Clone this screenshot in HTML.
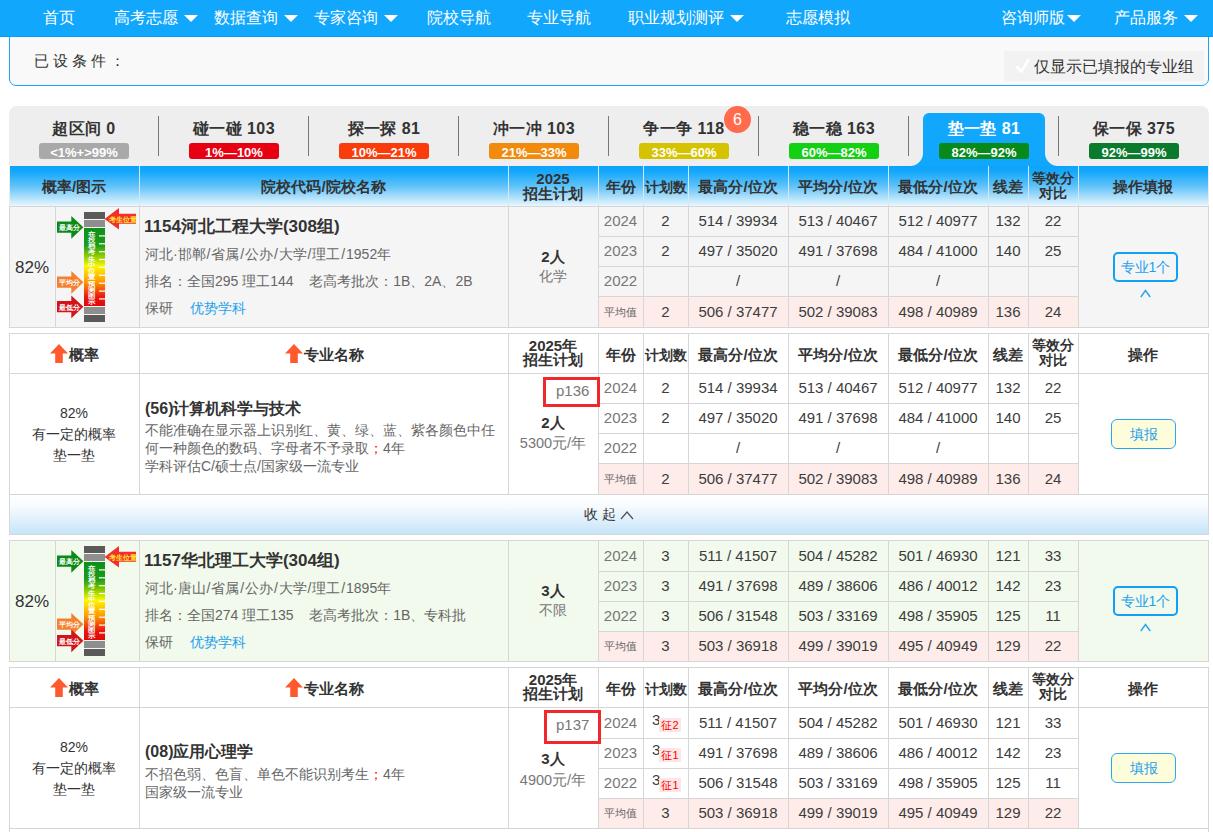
<!DOCTYPE html><html><head><meta charset="utf-8"><style>html,body{margin:0;padding:0;}body{width:1213px;height:832px;overflow:hidden;position:relative;background:#fff;font-family:"Liberation Sans", sans-serif;}</style></head><body><div style="position:absolute;left:9px;top:30px;width:1198px;height:54px;border:1px solid #18a6f6;border-radius:0 0 7px 7px;background:#f9f9f9;"></div>
<div style="position:absolute;left:0px;top:0px;width:1213px;height:37px;background:#11a7fd"></div>
<div style="position:absolute;left:0px;top:36px;width:1213px;height:1px;background:#03a0f8"></div>
<div style="position:absolute;left:43px;top:8.0px;height:20px;line-height:20px;font-size:16px;color:#fff;white-space:nowrap;">首页</div>
<div style="position:absolute;left:114px;top:8.0px;height:20px;line-height:20px;font-size:16px;color:#fff;white-space:nowrap;">高考志愿</div>
<div style="position:absolute;left:184px;top:15px;width:0;height:0;border-left:7.0px solid transparent;border-right:7.0px solid transparent;border-top:7px solid #fff;"></div>
<div style="position:absolute;left:214px;top:8.0px;height:20px;line-height:20px;font-size:16px;color:#fff;white-space:nowrap;">数据查询</div>
<div style="position:absolute;left:284px;top:15px;width:0;height:0;border-left:7.0px solid transparent;border-right:7.0px solid transparent;border-top:7px solid #fff;"></div>
<div style="position:absolute;left:314px;top:8.0px;height:20px;line-height:20px;font-size:16px;color:#fff;white-space:nowrap;">专家咨询</div>
<div style="position:absolute;left:384px;top:15px;width:0;height:0;border-left:7.0px solid transparent;border-right:7.0px solid transparent;border-top:7px solid #fff;"></div>
<div style="position:absolute;left:427px;top:8.0px;height:20px;line-height:20px;font-size:16px;color:#fff;white-space:nowrap;">院校导航</div>
<div style="position:absolute;left:527px;top:8.0px;height:20px;line-height:20px;font-size:16px;color:#fff;white-space:nowrap;">专业导航</div>
<div style="position:absolute;left:628px;top:8.0px;height:20px;line-height:20px;font-size:16px;color:#fff;white-space:nowrap;">职业规划测评</div>
<div style="position:absolute;left:730px;top:15px;width:0;height:0;border-left:7.0px solid transparent;border-right:7.0px solid transparent;border-top:7px solid #fff;"></div>
<div style="position:absolute;left:786px;top:8.0px;height:20px;line-height:20px;font-size:16px;color:#fff;white-space:nowrap;">志愿模拟</div>
<div style="position:absolute;left:1001px;top:8.0px;height:20px;line-height:20px;font-size:16px;color:#fff;white-space:nowrap;">咨询师版</div>
<div style="position:absolute;left:1067px;top:15px;width:0;height:0;border-left:7.0px solid transparent;border-right:7.0px solid transparent;border-top:7px solid #fff;"></div>
<div style="position:absolute;left:1114px;top:8.0px;height:20px;line-height:20px;font-size:16px;color:#fff;white-space:nowrap;">产品服务</div>
<div style="position:absolute;left:1184px;top:15px;width:0;height:0;border-left:7.0px solid transparent;border-right:7.0px solid transparent;border-top:7px solid #fff;"></div>
<div style="position:absolute;left:34px;top:50.0px;height:21px;line-height:21px;font-size:15px;color:#333;white-space:nowrap;letter-spacing:4px;">已设条件：</div>
<div style="position:absolute;left:1004px;top:51px;width:200px;height:30px;background:#f2f2f2"></div>
<svg style="position:absolute;left:1012px;top:55px" width="22" height="22"><polyline points="5.3,12.3 9.3,16.6 16.2,5.2" fill="none" stroke="#fff" stroke-width="2.8" stroke-linecap="round" stroke-linejoin="round"/></svg>
<div style="position:absolute;left:1034px;top:56.0px;height:22px;line-height:22px;font-size:16px;color:#333;white-space:nowrap;">仅显示已填报的专业组</div>
<div style="position:absolute;left:9px;top:106px;width:1200px;height:60px;background:#eeeeee;border-radius:8px 8px 0 0;"></div>
<div style="position:absolute;left:923px;top:113px;width:122px;height:53px;background:#11a7fd;border-radius:6px 6px 0 0;"></div>
<div style="position:absolute;left:910px;top:153px;width:13px;height:13px;background:radial-gradient(circle at 0 0, transparent 12.5px, #11a7fd 13.5px);"></div>
<div style="position:absolute;left:1045px;top:153px;width:13px;height:13px;background:radial-gradient(circle at 100% 0, transparent 12.5px, #11a7fd 13.5px);"></div>
<div style="position:absolute;left:158px;top:116px;width:1px;height:40px;background:#777"></div>
<div style="position:absolute;left:14px;top:119.0px;height:20px;line-height:20px;font-size:16px;color:#333;white-space:nowrap;font-weight:bold;width:140px;text-align:center;letter-spacing:0.4px;">超区间 0</div>
<div style="position:absolute;left:39px;top:143px;width:90px;height:15px;padding-top:1px;border-radius:3px;background:#a9a9a9;color:#fff;font-size:13px;font-weight:bold;line-height:17px;text-align:center;white-space:nowrap;">&lt;1%+&gt;99%</div>
<div style="position:absolute;left:308px;top:116px;width:1px;height:40px;background:#777"></div>
<div style="position:absolute;left:164px;top:119.0px;height:20px;line-height:20px;font-size:16px;color:#333;white-space:nowrap;font-weight:bold;width:140px;text-align:center;letter-spacing:0.4px;">碰一碰 103</div>
<div style="position:absolute;left:189px;top:143px;width:90px;height:15px;padding-top:1px;border-radius:3px;background:#e60012;color:#fff;font-size:13px;font-weight:bold;line-height:17px;text-align:center;white-space:nowrap;">1%—10%</div>
<div style="position:absolute;left:458px;top:116px;width:1px;height:40px;background:#777"></div>
<div style="position:absolute;left:314px;top:119.0px;height:20px;line-height:20px;font-size:16px;color:#333;white-space:nowrap;font-weight:bold;width:140px;text-align:center;letter-spacing:0.4px;">探一探 81</div>
<div style="position:absolute;left:339px;top:143px;width:90px;height:15px;padding-top:1px;border-radius:3px;background:#fa3c0a;color:#fff;font-size:13px;font-weight:bold;line-height:17px;text-align:center;white-space:nowrap;">10%—21%</div>
<div style="position:absolute;left:608px;top:116px;width:1px;height:40px;background:#777"></div>
<div style="position:absolute;left:464px;top:119.0px;height:20px;line-height:20px;font-size:16px;color:#333;white-space:nowrap;font-weight:bold;width:140px;text-align:center;letter-spacing:0.4px;">冲一冲 103</div>
<div style="position:absolute;left:489px;top:143px;width:90px;height:15px;padding-top:1px;border-radius:3px;background:#f28a0c;color:#fff;font-size:13px;font-weight:bold;line-height:17px;text-align:center;white-space:nowrap;">21%—33%</div>
<div style="position:absolute;left:758px;top:116px;width:1px;height:40px;background:#777"></div>
<div style="position:absolute;left:614px;top:119.0px;height:20px;line-height:20px;font-size:16px;color:#333;white-space:nowrap;font-weight:bold;width:140px;text-align:center;letter-spacing:0.4px;">争一争 118</div>
<div style="position:absolute;left:639px;top:143px;width:90px;height:15px;padding-top:1px;border-radius:3px;background:#d6c300;color:#fff;font-size:13px;font-weight:bold;line-height:17px;text-align:center;white-space:nowrap;">33%—60%</div>
<div style="position:absolute;left:908px;top:116px;width:1px;height:40px;background:#777"></div>
<div style="position:absolute;left:764px;top:119.0px;height:20px;line-height:20px;font-size:16px;color:#333;white-space:nowrap;font-weight:bold;width:140px;text-align:center;letter-spacing:0.4px;">稳一稳 163</div>
<div style="position:absolute;left:789px;top:143px;width:90px;height:15px;padding-top:1px;border-radius:3px;background:#13d013;color:#fff;font-size:13px;font-weight:bold;line-height:17px;text-align:center;white-space:nowrap;">60%—82%</div>
<div style="position:absolute;left:1058px;top:116px;width:1px;height:40px;background:#777"></div>
<div style="position:absolute;left:914px;top:119.0px;height:20px;line-height:20px;font-size:16px;color:#fff;white-space:nowrap;font-weight:bold;width:140px;text-align:center;letter-spacing:0.4px;">垫一垫 81</div>
<div style="position:absolute;left:939px;top:143px;width:90px;height:15px;padding-top:1px;border-radius:3px;background:#078a1a;color:#fff;font-size:13px;font-weight:bold;line-height:17px;text-align:center;white-space:nowrap;">82%—92%</div>
<div style="position:absolute;left:1064px;top:119.0px;height:20px;line-height:20px;font-size:16px;color:#333;white-space:nowrap;font-weight:bold;width:140px;text-align:center;letter-spacing:0.4px;">保一保 375</div>
<div style="position:absolute;left:1089px;top:143px;width:90px;height:15px;padding-top:1px;border-radius:3px;background:#0a7a2c;color:#fff;font-size:13px;font-weight:bold;line-height:17px;text-align:center;white-space:nowrap;">92%—99%</div>
<div style="position:absolute;left:724px;top:106px;width:27px;height:27px;border-radius:50%;background:#ff6b4c;color:#fff;font-size:16px;line-height:27px;text-align:center;">6</div>
<div style="position:absolute;left:9px;top:166px;width:1200px;height:40px;background:#f2ece8"></div>
<div style="position:absolute;left:10px;top:166px;width:1198px;height:40px;background:linear-gradient(#0aa3fd 0%, #16a8fb 15%, #5ec2f9 50%, #eaf7fe 100%)"></div>
<div style="position:absolute;left:9px;top:166px;width:1199px;height:40px;background:transparent"></div>
<div style="position:absolute;left:9px;top:178.0px;height:18px;line-height:18px;font-size:15px;color:#333;white-space:nowrap;font-weight:bold;width:130px;text-align:center;">概率/图示</div>
<div style="position:absolute;left:139px;top:178.0px;height:18px;line-height:18px;font-size:15px;color:#333;white-space:nowrap;font-weight:bold;width:369px;text-align:center;">院校代码/院校名称</div>
<div style="position:absolute;left:508px;top:171.0px;height:15px;line-height:15px;font-size:15px;color:#333;white-space:nowrap;font-weight:bold;width:90px;text-align:center;">2025</div>
<div style="position:absolute;left:508px;top:186.0px;height:15px;line-height:15px;font-size:15px;color:#333;white-space:nowrap;font-weight:bold;width:90px;text-align:center;">招生计划</div>
<div style="position:absolute;left:598px;top:178.0px;height:18px;line-height:18px;font-size:15px;color:#333;white-space:nowrap;font-weight:bold;width:45px;text-align:center;">年份</div>
<div style="position:absolute;left:643px;top:178.0px;height:18px;line-height:18px;font-size:14px;color:#333;white-space:nowrap;font-weight:bold;width:45px;text-align:center;">计划数</div>
<div style="position:absolute;left:688px;top:178.0px;height:18px;line-height:18px;font-size:15px;color:#333;white-space:nowrap;font-weight:bold;width:100px;text-align:center;">最高分/位次</div>
<div style="position:absolute;left:788px;top:178.0px;height:18px;line-height:18px;font-size:15px;color:#333;white-space:nowrap;font-weight:bold;width:100px;text-align:center;">平均分/位次</div>
<div style="position:absolute;left:888px;top:178.0px;height:18px;line-height:18px;font-size:15px;color:#333;white-space:nowrap;font-weight:bold;width:100px;text-align:center;">最低分/位次</div>
<div style="position:absolute;left:988px;top:178.0px;height:18px;line-height:18px;font-size:15px;color:#333;white-space:nowrap;font-weight:bold;width:40px;text-align:center;">线差</div>
<div style="position:absolute;left:1028px;top:171.0px;height:15px;line-height:15px;font-size:13.5px;color:#333;white-space:nowrap;font-weight:bold;width:50px;text-align:center;">等效分</div>
<div style="position:absolute;left:1028px;top:186.0px;height:15px;line-height:15px;font-size:13.5px;color:#333;white-space:nowrap;font-weight:bold;width:50px;text-align:center;">对比</div>
<div style="position:absolute;left:1078px;top:178.0px;height:18px;line-height:18px;font-size:15px;color:#333;white-space:nowrap;font-weight:bold;width:130px;text-align:center;">操作填报</div>
<div style="position:absolute;left:139px;top:166px;width:1px;height:40px;background:#d8e8f2"></div>
<div style="position:absolute;left:508px;top:166px;width:1px;height:40px;background:#d8e8f2"></div>
<div style="position:absolute;left:598px;top:166px;width:1px;height:40px;background:#d8e8f2"></div>
<div style="position:absolute;left:643px;top:166px;width:1px;height:40px;background:#d8e8f2"></div>
<div style="position:absolute;left:688px;top:166px;width:1px;height:40px;background:#d8e8f2"></div>
<div style="position:absolute;left:788px;top:166px;width:1px;height:40px;background:#d8e8f2"></div>
<div style="position:absolute;left:888px;top:166px;width:1px;height:40px;background:#d8e8f2"></div>
<div style="position:absolute;left:988px;top:166px;width:1px;height:40px;background:#d8e8f2"></div>
<div style="position:absolute;left:1028px;top:166px;width:1px;height:40px;background:#d8e8f2"></div>
<div style="position:absolute;left:1078px;top:166px;width:1px;height:40px;background:#d8e8f2"></div>
<div style="position:absolute;left:9px;top:206px;width:1199px;height:121px;background:#f5f5f5"></div>
<div style="position:absolute;left:598px;top:212.0px;height:18px;line-height:18px;font-size:15px;color:#777;white-space:nowrap;width:45px;text-align:center;">2024</div>
<div style="position:absolute;left:643px;top:212.0px;height:18px;line-height:18px;font-size:15px;color:#3c3c3c;white-space:nowrap;width:45px;text-align:center;">2</div>
<div style="position:absolute;left:688px;top:212.0px;height:18px;line-height:18px;font-size:15px;color:#3c3c3c;white-space:nowrap;width:100px;text-align:center;">514 / 39934</div>
<div style="position:absolute;left:788px;top:212.0px;height:18px;line-height:18px;font-size:15px;color:#3c3c3c;white-space:nowrap;width:100px;text-align:center;">513 / 40467</div>
<div style="position:absolute;left:888px;top:212.0px;height:18px;line-height:18px;font-size:15px;color:#3c3c3c;white-space:nowrap;width:100px;text-align:center;">512 / 40977</div>
<div style="position:absolute;left:988px;top:212.0px;height:18px;line-height:18px;font-size:15px;color:#3c3c3c;white-space:nowrap;width:40px;text-align:center;">132</div>
<div style="position:absolute;left:1028px;top:212.0px;height:18px;line-height:18px;font-size:15px;color:#3c3c3c;white-space:nowrap;width:50px;text-align:center;">22</div>
<div style="position:absolute;left:598px;top:242.0px;height:18px;line-height:18px;font-size:15px;color:#777;white-space:nowrap;width:45px;text-align:center;">2023</div>
<div style="position:absolute;left:643px;top:242.0px;height:18px;line-height:18px;font-size:15px;color:#3c3c3c;white-space:nowrap;width:45px;text-align:center;">2</div>
<div style="position:absolute;left:688px;top:242.0px;height:18px;line-height:18px;font-size:15px;color:#3c3c3c;white-space:nowrap;width:100px;text-align:center;">497 / 35020</div>
<div style="position:absolute;left:788px;top:242.0px;height:18px;line-height:18px;font-size:15px;color:#3c3c3c;white-space:nowrap;width:100px;text-align:center;">491 / 37698</div>
<div style="position:absolute;left:888px;top:242.0px;height:18px;line-height:18px;font-size:15px;color:#3c3c3c;white-space:nowrap;width:100px;text-align:center;">484 / 41000</div>
<div style="position:absolute;left:988px;top:242.0px;height:18px;line-height:18px;font-size:15px;color:#3c3c3c;white-space:nowrap;width:40px;text-align:center;">140</div>
<div style="position:absolute;left:1028px;top:242.0px;height:18px;line-height:18px;font-size:15px;color:#3c3c3c;white-space:nowrap;width:50px;text-align:center;">25</div>
<div style="position:absolute;left:598px;top:272.0px;height:18px;line-height:18px;font-size:15px;color:#777;white-space:nowrap;width:45px;text-align:center;">2022</div>
<div style="position:absolute;left:643px;top:272.0px;height:18px;line-height:18px;font-size:15px;color:#3c3c3c;white-space:nowrap;width:45px;text-align:center;"></div>
<div style="position:absolute;left:688px;top:272.0px;height:18px;line-height:18px;font-size:15px;color:#3c3c3c;white-space:nowrap;width:100px;text-align:center;">/</div>
<div style="position:absolute;left:788px;top:272.0px;height:18px;line-height:18px;font-size:15px;color:#3c3c3c;white-space:nowrap;width:100px;text-align:center;">/</div>
<div style="position:absolute;left:888px;top:272.0px;height:18px;line-height:18px;font-size:15px;color:#3c3c3c;white-space:nowrap;width:100px;text-align:center;">/</div>
<div style="position:absolute;left:988px;top:272.0px;height:18px;line-height:18px;font-size:15px;color:#3c3c3c;white-space:nowrap;width:40px;text-align:center;"></div>
<div style="position:absolute;left:1028px;top:272.0px;height:18px;line-height:18px;font-size:15px;color:#3c3c3c;white-space:nowrap;width:50px;text-align:center;"></div>
<div style="position:absolute;left:599px;top:297px;width:479px;height:30px;background:#fdecea"></div>
<div style="position:absolute;left:598px;top:304.5px;height:14px;line-height:14px;font-size:11px;color:#666;white-space:nowrap;width:45px;text-align:center;">平均值</div>
<div style="position:absolute;left:643px;top:302.5px;height:18px;line-height:18px;font-size:15px;color:#3c3c3c;white-space:nowrap;width:45px;text-align:center;">2</div>
<div style="position:absolute;left:688px;top:302.5px;height:18px;line-height:18px;font-size:15px;color:#3c3c3c;white-space:nowrap;width:100px;text-align:center;">506 / 37477</div>
<div style="position:absolute;left:788px;top:302.5px;height:18px;line-height:18px;font-size:15px;color:#3c3c3c;white-space:nowrap;width:100px;text-align:center;">502 / 39083</div>
<div style="position:absolute;left:888px;top:302.5px;height:18px;line-height:18px;font-size:15px;color:#3c3c3c;white-space:nowrap;width:100px;text-align:center;">498 / 40989</div>
<div style="position:absolute;left:988px;top:302.5px;height:18px;line-height:18px;font-size:15px;color:#3c3c3c;white-space:nowrap;width:40px;text-align:center;">136</div>
<div style="position:absolute;left:1028px;top:302.5px;height:18px;line-height:18px;font-size:15px;color:#3c3c3c;white-space:nowrap;width:50px;text-align:center;">24</div>
<div style="position:absolute;left:598px;top:236px;width:480px;height:1px;background:#d6d6d6"></div>
<div style="position:absolute;left:598px;top:266px;width:480px;height:1px;background:#d6d6d6"></div>
<div style="position:absolute;left:598px;top:296px;width:480px;height:1px;background:#d6d6d6"></div>
<div style="position:absolute;left:9px;top:206px;width:1200px;height:1px;background:#d6d6d6"></div>
<div style="position:absolute;left:9px;top:327px;width:1200px;height:1px;background:#d6d6d6"></div>
<div style="position:absolute;left:9px;top:206px;width:1px;height:122px;background:#d6d6d6"></div>
<div style="position:absolute;left:1208px;top:206px;width:1px;height:122px;background:#d6d6d6"></div>
<div style="position:absolute;left:55px;top:206px;width:1px;height:121px;background:#d6d6d6"></div>
<div style="position:absolute;left:139px;top:206px;width:1px;height:121px;background:#d6d6d6"></div>
<div style="position:absolute;left:508px;top:206px;width:1px;height:121px;background:#d6d6d6"></div>
<div style="position:absolute;left:598px;top:206px;width:1px;height:121px;background:#d6d6d6"></div>
<div style="position:absolute;left:643px;top:206px;width:1px;height:121px;background:#d6d6d6"></div>
<div style="position:absolute;left:688px;top:206px;width:1px;height:121px;background:#d6d6d6"></div>
<div style="position:absolute;left:788px;top:206px;width:1px;height:121px;background:#d6d6d6"></div>
<div style="position:absolute;left:888px;top:206px;width:1px;height:121px;background:#d6d6d6"></div>
<div style="position:absolute;left:988px;top:206px;width:1px;height:121px;background:#d6d6d6"></div>
<div style="position:absolute;left:1028px;top:206px;width:1px;height:121px;background:#d6d6d6"></div>
<div style="position:absolute;left:1078px;top:206px;width:1px;height:121px;background:#d6d6d6"></div>
<div style="position:absolute;left:15px;top:257.5px;height:20px;line-height:20px;font-size:17px;color:#333;white-space:nowrap;">82%</div>
<svg style="position:absolute;left:55px;top:206px" width="84" height="121" viewBox="0 0 84 121"><defs><linearGradient id="gg" x1="0" y1="0" x2="0" y2="1"><stop offset="0" stop-color="#0c8f1c"/><stop offset="0.22" stop-color="#1c9c18"/><stop offset="0.36" stop-color="#8ccc00"/><stop offset="0.49" stop-color="#fcf800"/><stop offset="0.7" stop-color="#ff9400"/><stop offset="0.88" stop-color="#e81810"/><stop offset="1" stop-color="#e00808"/></linearGradient></defs><rect x="29" y="6" width="21" height="7" fill="#5a5a5a"/><rect x="29" y="14" width="21" height="7" fill="#8e8e8e"/><rect x="29" y="22" width="21" height="78" fill="url(#gg)"/><rect x="29" y="101" width="21" height="7" fill="#8e8e8e"/><rect x="29" y="109" width="21" height="7" fill="#5a5a5a"/><rect x="44" y="29.3" width="6" height="1.2" fill="#fff"/><rect x="44" y="37.2" width="6" height="1.2" fill="#fff"/><rect x="44" y="45.1" width="6" height="1.2" fill="#fff"/><rect x="44" y="52.9" width="6" height="1.2" fill="#fff"/><rect x="44" y="60.8" width="6" height="1.2" fill="#fff"/><rect x="44" y="68.7" width="6" height="1.2" fill="#fff"/><rect x="44" y="76.6" width="6" height="1.2" fill="#fff"/><rect x="44" y="84.5" width="6" height="1.2" fill="#fff"/><rect x="44" y="92.3" width="6" height="1.2" fill="#fff"/><text transform="translate(36.5,26.80) scale(1.05,0.85)" y="3.2" font-size="7.2" font-weight="bold" fill="#fff" text-anchor="middle" font-family="Liberation Sans, sans-serif">在</text><text transform="translate(36.5,33.05) scale(1.05,0.85)" y="3.2" font-size="7.2" font-weight="bold" fill="#fff" text-anchor="middle" font-family="Liberation Sans, sans-serif">投</text><text transform="translate(36.5,39.30) scale(1.05,0.85)" y="3.2" font-size="7.2" font-weight="bold" fill="#fff" text-anchor="middle" font-family="Liberation Sans, sans-serif">档</text><text transform="translate(36.5,45.55) scale(1.05,0.85)" y="3.2" font-size="7.2" font-weight="bold" fill="#fff" text-anchor="middle" font-family="Liberation Sans, sans-serif">考</text><text transform="translate(36.5,51.80) scale(1.05,0.85)" y="3.2" font-size="7.2" font-weight="bold" fill="#fff" text-anchor="middle" font-family="Liberation Sans, sans-serif">生</text><text transform="translate(36.5,58.05) scale(1.05,0.85)" y="3.2" font-size="7.2" font-weight="bold" fill="#fff" text-anchor="middle" font-family="Liberation Sans, sans-serif">中</text><text transform="translate(36.5,64.30) scale(1.05,0.85)" y="3.2" font-size="7.2" font-weight="bold" fill="#fff" text-anchor="middle" font-family="Liberation Sans, sans-serif">位</text><text transform="translate(36.5,70.55) scale(1.05,0.85)" y="3.2" font-size="7.2" font-weight="bold" fill="#fff" text-anchor="middle" font-family="Liberation Sans, sans-serif">置</text><text transform="translate(36.5,76.80) scale(1.05,0.85)" y="3.2" font-size="7.2" font-weight="bold" fill="#fff" text-anchor="middle" font-family="Liberation Sans, sans-serif">预</text><text transform="translate(36.5,83.05) scale(1.05,0.85)" y="3.2" font-size="7.2" font-weight="bold" fill="#fff" text-anchor="middle" font-family="Liberation Sans, sans-serif">测</text><text transform="translate(36.5,89.30) scale(1.05,0.85)" y="3.2" font-size="7.2" font-weight="bold" fill="#fff" text-anchor="middle" font-family="Liberation Sans, sans-serif">图</text><text transform="translate(36.5,95.55) scale(1.05,0.85)" y="3.2" font-size="7.2" font-weight="bold" fill="#fff" text-anchor="middle" font-family="Liberation Sans, sans-serif">示</text><polygon points="2,15.5 16.3,15.5 16.3,10 28.4,21.3 16.3,32.8 16.3,26.8 2,26.8" fill="#0b8a16"/><text x="14" y="24.3" font-size="6.8" font-weight="bold" fill="#fff" text-anchor="middle" font-family="Liberation Sans, sans-serif">最高分</text><polygon points="2,70.5 16.3,70.5 16.3,65 28.4,76.3 16.3,87.8 16.3,81.8 2,81.8" fill="#f5812e"/><text x="14" y="79.3" font-size="6.8" font-weight="bold" fill="#fff" text-anchor="middle" font-family="Liberation Sans, sans-serif">平均分</text><polygon points="2,94.9 16.3,94.9 16.3,89.4 28.4,100.7 16.3,112.2 16.3,106.2 2,106.2" fill="#d2151b"/><text x="14" y="103.7" font-size="6.8" font-weight="bold" fill="#fff" text-anchor="middle" font-family="Liberation Sans, sans-serif">最低分</text><polygon points="49.5,13 64,2 64,7.7 81,7.7 81,17.7 64,17.7 64,23.6" fill="#f32e2e"/><text x="67.5" y="16.0" font-size="7" font-weight="bold" fill="#ffe52a" text-anchor="middle" font-family="Liberation Sans, sans-serif">考生位置</text></svg>
<div style="position:absolute;left:144px;top:215.5px;height:22px;line-height:22px;font-size:17px;color:#333;white-space:nowrap;font-weight:bold;">1154河北工程大学(308组)</div>
<div style="position:absolute;left:145px;top:243.5px;height:20px;line-height:20px;font-size:14px;color:#666;white-space:nowrap;">河北·邯郸<span style="margin:0 0.9px">/</span>省属<span style="margin:0 0.9px">/</span>公办<span style="margin:0 0.9px">/</span>大学<span style="margin:0 0.9px">/</span>理工<span style="margin:0 0.9px">/</span>1952年</div>
<div style="position:absolute;left:145px;top:270.5px;height:20px;line-height:20px;font-size:14px;color:#666;white-space:nowrap;">排名：全国295 理工144 &nbsp;&nbsp; 老高考批次：1B、2A、2B</div>
<div style="position:absolute;left:145px;top:297.5px;height:20px;line-height:20px;font-size:14px;color:#666;white-space:nowrap;">保研</div>
<div style="position:absolute;left:190px;top:297.5px;height:20px;line-height:20px;font-size:14px;color:#1ba1ee;white-space:nowrap;">优势学科</div>
<div style="position:absolute;left:508px;top:247.5px;height:18px;line-height:18px;font-size:15px;color:#333;white-space:nowrap;font-weight:bold;width:90px;text-align:center;">2人</div>
<div style="position:absolute;left:508px;top:266.5px;height:18px;line-height:18px;font-size:14px;color:#777;white-space:nowrap;width:90px;text-align:center;">化学</div>
<div style="position:absolute;left:1113px;top:252px;width:61px;height:26px;border:2px solid #10a0f5;border-radius:5px;color:#1ea0ee;font-size:14px;line-height:26px;text-align:center;">专业1个</div>
<svg style="position:absolute;left:1140px;top:289px" width="11" height="9"><polyline points="0.8,8 5.5,1.5 10.2,8" fill="none" stroke="#2aa3ee" stroke-width="1.4"/></svg>
<div style="position:absolute;left:9px;top:333px;width:1199px;height:161px;background:#fff"></div>
<svg style="position:absolute;left:50px;top:343.5px" width="18" height="19"><polygon points="9,0 18,9.5 12.8,9.5 12.8,19 5.2,19 5.2,9.5 0,9.5" fill="#ff5a2d"/></svg>
<div style="position:absolute;left:69px;top:345.5px;height:18px;line-height:18px;font-size:15px;color:#333;white-space:nowrap;font-weight:bold;">概率</div>
<svg style="position:absolute;left:285px;top:343.5px" width="18" height="19"><polygon points="9,0 18,9.5 12.8,9.5 12.8,19 5.2,19 5.2,9.5 0,9.5" fill="#ff5a2d"/></svg>
<div style="position:absolute;left:304px;top:345.5px;height:18px;line-height:18px;font-size:15px;color:#333;white-space:nowrap;font-weight:bold;">专业名称</div>
<div style="position:absolute;left:508px;top:337.5px;height:15px;line-height:15px;font-size:15px;color:#333;white-space:nowrap;font-weight:bold;width:90px;text-align:center;">2025年</div>
<div style="position:absolute;left:508px;top:352.0px;height:15px;line-height:15px;font-size:15px;color:#333;white-space:nowrap;font-weight:bold;width:90px;text-align:center;">招生计划</div>
<div style="position:absolute;left:598px;top:345.5px;height:18px;line-height:18px;font-size:15px;color:#333;white-space:nowrap;font-weight:bold;width:45px;text-align:center;">年份</div>
<div style="position:absolute;left:643px;top:345.5px;height:18px;line-height:18px;font-size:14px;color:#333;white-space:nowrap;font-weight:bold;width:45px;text-align:center;">计划数</div>
<div style="position:absolute;left:688px;top:345.5px;height:18px;line-height:18px;font-size:15px;color:#333;white-space:nowrap;font-weight:bold;width:100px;text-align:center;">最高分/位次</div>
<div style="position:absolute;left:788px;top:345.5px;height:18px;line-height:18px;font-size:15px;color:#333;white-space:nowrap;font-weight:bold;width:100px;text-align:center;">平均分/位次</div>
<div style="position:absolute;left:888px;top:345.5px;height:18px;line-height:18px;font-size:15px;color:#333;white-space:nowrap;font-weight:bold;width:100px;text-align:center;">最低分/位次</div>
<div style="position:absolute;left:988px;top:345.5px;height:18px;line-height:18px;font-size:15px;color:#333;white-space:nowrap;font-weight:bold;width:40px;text-align:center;">线差</div>
<div style="position:absolute;left:1028px;top:338.0px;height:15px;line-height:15px;font-size:13.5px;color:#333;white-space:nowrap;font-weight:bold;width:50px;text-align:center;">等效分</div>
<div style="position:absolute;left:1028px;top:353.0px;height:15px;line-height:15px;font-size:13.5px;color:#333;white-space:nowrap;font-weight:bold;width:50px;text-align:center;">对比</div>
<div style="position:absolute;left:1078px;top:345.5px;height:18px;line-height:18px;font-size:15px;color:#333;white-space:nowrap;font-weight:bold;width:130px;text-align:center;">操作</div>
<div style="position:absolute;left:598px;top:379.0px;height:18px;line-height:18px;font-size:15px;color:#777;white-space:nowrap;width:45px;text-align:center;">2024</div>
<div style="position:absolute;left:643px;top:379.0px;height:18px;line-height:18px;font-size:15px;color:#3c3c3c;white-space:nowrap;width:45px;text-align:center;">2</div>
<div style="position:absolute;left:688px;top:379.0px;height:18px;line-height:18px;font-size:15px;color:#3c3c3c;white-space:nowrap;width:100px;text-align:center;">514 / 39934</div>
<div style="position:absolute;left:788px;top:379.0px;height:18px;line-height:18px;font-size:15px;color:#3c3c3c;white-space:nowrap;width:100px;text-align:center;">513 / 40467</div>
<div style="position:absolute;left:888px;top:379.0px;height:18px;line-height:18px;font-size:15px;color:#3c3c3c;white-space:nowrap;width:100px;text-align:center;">512 / 40977</div>
<div style="position:absolute;left:988px;top:379.0px;height:18px;line-height:18px;font-size:15px;color:#3c3c3c;white-space:nowrap;width:40px;text-align:center;">132</div>
<div style="position:absolute;left:1028px;top:379.0px;height:18px;line-height:18px;font-size:15px;color:#3c3c3c;white-space:nowrap;width:50px;text-align:center;">22</div>
<div style="position:absolute;left:598px;top:409.0px;height:18px;line-height:18px;font-size:15px;color:#777;white-space:nowrap;width:45px;text-align:center;">2023</div>
<div style="position:absolute;left:643px;top:409.0px;height:18px;line-height:18px;font-size:15px;color:#3c3c3c;white-space:nowrap;width:45px;text-align:center;">2</div>
<div style="position:absolute;left:688px;top:409.0px;height:18px;line-height:18px;font-size:15px;color:#3c3c3c;white-space:nowrap;width:100px;text-align:center;">497 / 35020</div>
<div style="position:absolute;left:788px;top:409.0px;height:18px;line-height:18px;font-size:15px;color:#3c3c3c;white-space:nowrap;width:100px;text-align:center;">491 / 37698</div>
<div style="position:absolute;left:888px;top:409.0px;height:18px;line-height:18px;font-size:15px;color:#3c3c3c;white-space:nowrap;width:100px;text-align:center;">484 / 41000</div>
<div style="position:absolute;left:988px;top:409.0px;height:18px;line-height:18px;font-size:15px;color:#3c3c3c;white-space:nowrap;width:40px;text-align:center;">140</div>
<div style="position:absolute;left:1028px;top:409.0px;height:18px;line-height:18px;font-size:15px;color:#3c3c3c;white-space:nowrap;width:50px;text-align:center;">25</div>
<div style="position:absolute;left:598px;top:439.0px;height:18px;line-height:18px;font-size:15px;color:#777;white-space:nowrap;width:45px;text-align:center;">2022</div>
<div style="position:absolute;left:643px;top:439.0px;height:18px;line-height:18px;font-size:15px;color:#3c3c3c;white-space:nowrap;width:45px;text-align:center;"></div>
<div style="position:absolute;left:688px;top:439.0px;height:18px;line-height:18px;font-size:15px;color:#3c3c3c;white-space:nowrap;width:100px;text-align:center;">/</div>
<div style="position:absolute;left:788px;top:439.0px;height:18px;line-height:18px;font-size:15px;color:#3c3c3c;white-space:nowrap;width:100px;text-align:center;">/</div>
<div style="position:absolute;left:888px;top:439.0px;height:18px;line-height:18px;font-size:15px;color:#3c3c3c;white-space:nowrap;width:100px;text-align:center;">/</div>
<div style="position:absolute;left:988px;top:439.0px;height:18px;line-height:18px;font-size:15px;color:#3c3c3c;white-space:nowrap;width:40px;text-align:center;"></div>
<div style="position:absolute;left:1028px;top:439.0px;height:18px;line-height:18px;font-size:15px;color:#3c3c3c;white-space:nowrap;width:50px;text-align:center;"></div>
<div style="position:absolute;left:599px;top:464px;width:479px;height:30px;background:#fdecea"></div>
<div style="position:absolute;left:598px;top:471.5px;height:14px;line-height:14px;font-size:11px;color:#666;white-space:nowrap;width:45px;text-align:center;">平均值</div>
<div style="position:absolute;left:643px;top:469.5px;height:18px;line-height:18px;font-size:15px;color:#3c3c3c;white-space:nowrap;width:45px;text-align:center;">2</div>
<div style="position:absolute;left:688px;top:469.5px;height:18px;line-height:18px;font-size:15px;color:#3c3c3c;white-space:nowrap;width:100px;text-align:center;">506 / 37477</div>
<div style="position:absolute;left:788px;top:469.5px;height:18px;line-height:18px;font-size:15px;color:#3c3c3c;white-space:nowrap;width:100px;text-align:center;">502 / 39083</div>
<div style="position:absolute;left:888px;top:469.5px;height:18px;line-height:18px;font-size:15px;color:#3c3c3c;white-space:nowrap;width:100px;text-align:center;">498 / 40989</div>
<div style="position:absolute;left:988px;top:469.5px;height:18px;line-height:18px;font-size:15px;color:#3c3c3c;white-space:nowrap;width:40px;text-align:center;">136</div>
<div style="position:absolute;left:1028px;top:469.5px;height:18px;line-height:18px;font-size:15px;color:#3c3c3c;white-space:nowrap;width:50px;text-align:center;">24</div>
<div style="position:absolute;left:598px;top:403px;width:480px;height:1px;background:#d6d6d6"></div>
<div style="position:absolute;left:598px;top:433px;width:480px;height:1px;background:#d6d6d6"></div>
<div style="position:absolute;left:598px;top:463px;width:480px;height:1px;background:#d6d6d6"></div>
<div style="position:absolute;left:9px;top:333px;width:1200px;height:1px;background:#d6d6d6"></div>
<div style="position:absolute;left:9px;top:373px;width:1200px;height:1px;background:#d6d6d6"></div>
<div style="position:absolute;left:9px;top:494px;width:1200px;height:1px;background:#d6d6d6"></div>
<div style="position:absolute;left:9px;top:333px;width:1px;height:162px;background:#d6d6d6"></div>
<div style="position:absolute;left:1208px;top:333px;width:1px;height:162px;background:#d6d6d6"></div>
<div style="position:absolute;left:139px;top:333px;width:1px;height:161px;background:#d6d6d6"></div>
<div style="position:absolute;left:508px;top:333px;width:1px;height:161px;background:#d6d6d6"></div>
<div style="position:absolute;left:598px;top:333px;width:1px;height:161px;background:#d6d6d6"></div>
<div style="position:absolute;left:643px;top:333px;width:1px;height:161px;background:#d6d6d6"></div>
<div style="position:absolute;left:688px;top:333px;width:1px;height:161px;background:#d6d6d6"></div>
<div style="position:absolute;left:788px;top:333px;width:1px;height:161px;background:#d6d6d6"></div>
<div style="position:absolute;left:888px;top:333px;width:1px;height:161px;background:#d6d6d6"></div>
<div style="position:absolute;left:988px;top:333px;width:1px;height:161px;background:#d6d6d6"></div>
<div style="position:absolute;left:1028px;top:333px;width:1px;height:161px;background:#d6d6d6"></div>
<div style="position:absolute;left:1078px;top:333px;width:1px;height:161px;background:#d6d6d6"></div>
<div style="position:absolute;left:9px;top:404.0px;height:18px;line-height:18px;font-size:14px;color:#333;white-space:nowrap;width:130px;text-align:center;">82%</div>
<div style="position:absolute;left:9px;top:425.0px;height:18px;line-height:18px;font-size:14px;color:#333;white-space:nowrap;width:130px;text-align:center;">有一定的概率</div>
<div style="position:absolute;left:9px;top:446.0px;height:18px;line-height:18px;font-size:14px;color:#333;white-space:nowrap;width:130px;text-align:center;">垫一垫</div>
<div style="position:absolute;left:145px;top:398.5px;height:20px;line-height:20px;font-size:16px;color:#333;white-space:nowrap;font-weight:bold;">(56)计算机科学与技术</div>
<div style="position:absolute;left:145px;top:421.0px;height:18px;line-height:18px;font-size:14px;color:#666;white-space:nowrap;">不能准确在显示器上识别红、黄、绿、蓝、紫各颜色中任</div>
<div style="position:absolute;left:145px;top:439.0px;height:18px;line-height:18px;font-size:14px;color:#666;white-space:nowrap;">何一种颜色的数码、字母者不予录取<span style="color:#f00">；</span>4年</div>
<div style="position:absolute;left:145px;top:457.0px;height:18px;line-height:18px;font-size:14px;color:#666;white-space:nowrap;">学科评估C/硕士点/国家级一流专业</div>
<div style="position:absolute;left:543px;top:377px;width:51px;height:24px;border:3px solid #f0282c;"></div>
<div style="position:absolute;left:556px;top:382.0px;height:18px;line-height:18px;font-size:15px;color:#777;white-space:nowrap;">p136</div>
<div style="position:absolute;left:508px;top:414.0px;height:18px;line-height:18px;font-size:15px;color:#333;white-space:nowrap;font-weight:bold;width:90px;text-align:center;">2人</div>
<div style="position:absolute;left:508px;top:434.0px;height:18px;line-height:18px;font-size:14.5px;color:#777;white-space:nowrap;width:90px;text-align:center;">5300元/年</div>
<div style="position:absolute;left:1111px;top:419px;width:63px;height:28px;border:1.5px solid #2aa6f3;border-radius:6px;background:#fdfddc;color:#1ea0ee;font-size:14px;line-height:28px;text-align:center;">填报</div>
<div style="position:absolute;left:9px;top:495px;width:1199px;height:39px;background:linear-gradient(#ffffff 0%, #f7fbfe 30%, #c6e4fa 100%)"></div>
<div style="position:absolute;left:9px;top:534px;width:1200px;height:1px;background:#d6d6d6"></div>
<div style="position:absolute;left:9px;top:494px;width:1px;height:41px;background:#d6d6d6"></div>
<div style="position:absolute;left:1208px;top:494px;width:1px;height:41px;background:#d6d6d6"></div>
<div style="position:absolute;left:584px;top:505.0px;height:18px;line-height:18px;font-size:14px;color:#333;white-space:nowrap;">收 起</div>
<svg style="position:absolute;left:620px;top:510px" width="14" height="10"><polyline points="1,9 7,2 13,9" fill="none" stroke="#555" stroke-width="1.3"/></svg>
<div style="position:absolute;left:9px;top:540px;width:1199px;height:121px;background:#f1faec"></div>
<div style="position:absolute;left:598px;top:546.5px;height:18px;line-height:18px;font-size:15px;color:#777;white-space:nowrap;width:45px;text-align:center;">2024</div>
<div style="position:absolute;left:643px;top:546.5px;height:18px;line-height:18px;font-size:15px;color:#3c3c3c;white-space:nowrap;width:45px;text-align:center;">3</div>
<div style="position:absolute;left:688px;top:546.5px;height:18px;line-height:18px;font-size:15px;color:#3c3c3c;white-space:nowrap;width:100px;text-align:center;">511 / 41507</div>
<div style="position:absolute;left:788px;top:546.5px;height:18px;line-height:18px;font-size:15px;color:#3c3c3c;white-space:nowrap;width:100px;text-align:center;">504 / 45282</div>
<div style="position:absolute;left:888px;top:546.5px;height:18px;line-height:18px;font-size:15px;color:#3c3c3c;white-space:nowrap;width:100px;text-align:center;">501 / 46930</div>
<div style="position:absolute;left:988px;top:546.5px;height:18px;line-height:18px;font-size:15px;color:#3c3c3c;white-space:nowrap;width:40px;text-align:center;">121</div>
<div style="position:absolute;left:1028px;top:546.5px;height:18px;line-height:18px;font-size:15px;color:#3c3c3c;white-space:nowrap;width:50px;text-align:center;">33</div>
<div style="position:absolute;left:598px;top:577.0px;height:18px;line-height:18px;font-size:15px;color:#777;white-space:nowrap;width:45px;text-align:center;">2023</div>
<div style="position:absolute;left:643px;top:577.0px;height:18px;line-height:18px;font-size:15px;color:#3c3c3c;white-space:nowrap;width:45px;text-align:center;">3</div>
<div style="position:absolute;left:688px;top:577.0px;height:18px;line-height:18px;font-size:15px;color:#3c3c3c;white-space:nowrap;width:100px;text-align:center;">491 / 37698</div>
<div style="position:absolute;left:788px;top:577.0px;height:18px;line-height:18px;font-size:15px;color:#3c3c3c;white-space:nowrap;width:100px;text-align:center;">489 / 38606</div>
<div style="position:absolute;left:888px;top:577.0px;height:18px;line-height:18px;font-size:15px;color:#3c3c3c;white-space:nowrap;width:100px;text-align:center;">486 / 40012</div>
<div style="position:absolute;left:988px;top:577.0px;height:18px;line-height:18px;font-size:15px;color:#3c3c3c;white-space:nowrap;width:40px;text-align:center;">142</div>
<div style="position:absolute;left:1028px;top:577.0px;height:18px;line-height:18px;font-size:15px;color:#3c3c3c;white-space:nowrap;width:50px;text-align:center;">23</div>
<div style="position:absolute;left:598px;top:607.0px;height:18px;line-height:18px;font-size:15px;color:#777;white-space:nowrap;width:45px;text-align:center;">2022</div>
<div style="position:absolute;left:643px;top:607.0px;height:18px;line-height:18px;font-size:15px;color:#3c3c3c;white-space:nowrap;width:45px;text-align:center;">3</div>
<div style="position:absolute;left:688px;top:607.0px;height:18px;line-height:18px;font-size:15px;color:#3c3c3c;white-space:nowrap;width:100px;text-align:center;">506 / 31548</div>
<div style="position:absolute;left:788px;top:607.0px;height:18px;line-height:18px;font-size:15px;color:#3c3c3c;white-space:nowrap;width:100px;text-align:center;">503 / 33169</div>
<div style="position:absolute;left:888px;top:607.0px;height:18px;line-height:18px;font-size:15px;color:#3c3c3c;white-space:nowrap;width:100px;text-align:center;">498 / 35905</div>
<div style="position:absolute;left:988px;top:607.0px;height:18px;line-height:18px;font-size:15px;color:#3c3c3c;white-space:nowrap;width:40px;text-align:center;">125</div>
<div style="position:absolute;left:1028px;top:607.0px;height:18px;line-height:18px;font-size:15px;color:#3c3c3c;white-space:nowrap;width:50px;text-align:center;">11</div>
<div style="position:absolute;left:599px;top:632px;width:479px;height:29px;background:#fdecea"></div>
<div style="position:absolute;left:598px;top:639.0px;height:14px;line-height:14px;font-size:11px;color:#666;white-space:nowrap;width:45px;text-align:center;">平均值</div>
<div style="position:absolute;left:643px;top:637.0px;height:18px;line-height:18px;font-size:15px;color:#3c3c3c;white-space:nowrap;width:45px;text-align:center;">3</div>
<div style="position:absolute;left:688px;top:637.0px;height:18px;line-height:18px;font-size:15px;color:#3c3c3c;white-space:nowrap;width:100px;text-align:center;">503 / 36918</div>
<div style="position:absolute;left:788px;top:637.0px;height:18px;line-height:18px;font-size:15px;color:#3c3c3c;white-space:nowrap;width:100px;text-align:center;">499 / 39019</div>
<div style="position:absolute;left:888px;top:637.0px;height:18px;line-height:18px;font-size:15px;color:#3c3c3c;white-space:nowrap;width:100px;text-align:center;">495 / 40949</div>
<div style="position:absolute;left:988px;top:637.0px;height:18px;line-height:18px;font-size:15px;color:#3c3c3c;white-space:nowrap;width:40px;text-align:center;">129</div>
<div style="position:absolute;left:1028px;top:637.0px;height:18px;line-height:18px;font-size:15px;color:#3c3c3c;white-space:nowrap;width:50px;text-align:center;">22</div>
<div style="position:absolute;left:598px;top:571px;width:480px;height:1px;background:#d6d6d6"></div>
<div style="position:absolute;left:598px;top:601px;width:480px;height:1px;background:#d6d6d6"></div>
<div style="position:absolute;left:598px;top:631px;width:480px;height:1px;background:#d6d6d6"></div>
<div style="position:absolute;left:9px;top:540px;width:1200px;height:1px;background:#d6d6d6"></div>
<div style="position:absolute;left:9px;top:661px;width:1200px;height:1px;background:#d6d6d6"></div>
<div style="position:absolute;left:9px;top:540px;width:1px;height:122px;background:#d6d6d6"></div>
<div style="position:absolute;left:1208px;top:540px;width:1px;height:122px;background:#d6d6d6"></div>
<div style="position:absolute;left:55px;top:540px;width:1px;height:121px;background:#d6d6d6"></div>
<div style="position:absolute;left:139px;top:540px;width:1px;height:121px;background:#d6d6d6"></div>
<div style="position:absolute;left:508px;top:540px;width:1px;height:121px;background:#d6d6d6"></div>
<div style="position:absolute;left:598px;top:540px;width:1px;height:121px;background:#d6d6d6"></div>
<div style="position:absolute;left:643px;top:540px;width:1px;height:121px;background:#d6d6d6"></div>
<div style="position:absolute;left:688px;top:540px;width:1px;height:121px;background:#d6d6d6"></div>
<div style="position:absolute;left:788px;top:540px;width:1px;height:121px;background:#d6d6d6"></div>
<div style="position:absolute;left:888px;top:540px;width:1px;height:121px;background:#d6d6d6"></div>
<div style="position:absolute;left:988px;top:540px;width:1px;height:121px;background:#d6d6d6"></div>
<div style="position:absolute;left:1028px;top:540px;width:1px;height:121px;background:#d6d6d6"></div>
<div style="position:absolute;left:1078px;top:540px;width:1px;height:121px;background:#d6d6d6"></div>
<div style="position:absolute;left:15px;top:591.5px;height:20px;line-height:20px;font-size:17px;color:#333;white-space:nowrap;">82%</div>
<svg style="position:absolute;left:55px;top:540px" width="84" height="121" viewBox="0 0 84 121"><defs><linearGradient id="gg" x1="0" y1="0" x2="0" y2="1"><stop offset="0" stop-color="#0c8f1c"/><stop offset="0.22" stop-color="#1c9c18"/><stop offset="0.36" stop-color="#8ccc00"/><stop offset="0.49" stop-color="#fcf800"/><stop offset="0.7" stop-color="#ff9400"/><stop offset="0.88" stop-color="#e81810"/><stop offset="1" stop-color="#e00808"/></linearGradient></defs><rect x="29" y="6" width="21" height="7" fill="#5a5a5a"/><rect x="29" y="14" width="21" height="7" fill="#8e8e8e"/><rect x="29" y="22" width="21" height="78" fill="url(#gg)"/><rect x="29" y="101" width="21" height="7" fill="#8e8e8e"/><rect x="29" y="109" width="21" height="7" fill="#5a5a5a"/><rect x="44" y="29.3" width="6" height="1.2" fill="#fff"/><rect x="44" y="37.2" width="6" height="1.2" fill="#fff"/><rect x="44" y="45.1" width="6" height="1.2" fill="#fff"/><rect x="44" y="52.9" width="6" height="1.2" fill="#fff"/><rect x="44" y="60.8" width="6" height="1.2" fill="#fff"/><rect x="44" y="68.7" width="6" height="1.2" fill="#fff"/><rect x="44" y="76.6" width="6" height="1.2" fill="#fff"/><rect x="44" y="84.5" width="6" height="1.2" fill="#fff"/><rect x="44" y="92.3" width="6" height="1.2" fill="#fff"/><text transform="translate(36.5,26.80) scale(1.05,0.85)" y="3.2" font-size="7.2" font-weight="bold" fill="#fff" text-anchor="middle" font-family="Liberation Sans, sans-serif">在</text><text transform="translate(36.5,33.05) scale(1.05,0.85)" y="3.2" font-size="7.2" font-weight="bold" fill="#fff" text-anchor="middle" font-family="Liberation Sans, sans-serif">投</text><text transform="translate(36.5,39.30) scale(1.05,0.85)" y="3.2" font-size="7.2" font-weight="bold" fill="#fff" text-anchor="middle" font-family="Liberation Sans, sans-serif">档</text><text transform="translate(36.5,45.55) scale(1.05,0.85)" y="3.2" font-size="7.2" font-weight="bold" fill="#fff" text-anchor="middle" font-family="Liberation Sans, sans-serif">考</text><text transform="translate(36.5,51.80) scale(1.05,0.85)" y="3.2" font-size="7.2" font-weight="bold" fill="#fff" text-anchor="middle" font-family="Liberation Sans, sans-serif">生</text><text transform="translate(36.5,58.05) scale(1.05,0.85)" y="3.2" font-size="7.2" font-weight="bold" fill="#fff" text-anchor="middle" font-family="Liberation Sans, sans-serif">中</text><text transform="translate(36.5,64.30) scale(1.05,0.85)" y="3.2" font-size="7.2" font-weight="bold" fill="#fff" text-anchor="middle" font-family="Liberation Sans, sans-serif">位</text><text transform="translate(36.5,70.55) scale(1.05,0.85)" y="3.2" font-size="7.2" font-weight="bold" fill="#fff" text-anchor="middle" font-family="Liberation Sans, sans-serif">置</text><text transform="translate(36.5,76.80) scale(1.05,0.85)" y="3.2" font-size="7.2" font-weight="bold" fill="#fff" text-anchor="middle" font-family="Liberation Sans, sans-serif">预</text><text transform="translate(36.5,83.05) scale(1.05,0.85)" y="3.2" font-size="7.2" font-weight="bold" fill="#fff" text-anchor="middle" font-family="Liberation Sans, sans-serif">测</text><text transform="translate(36.5,89.30) scale(1.05,0.85)" y="3.2" font-size="7.2" font-weight="bold" fill="#fff" text-anchor="middle" font-family="Liberation Sans, sans-serif">图</text><text transform="translate(36.5,95.55) scale(1.05,0.85)" y="3.2" font-size="7.2" font-weight="bold" fill="#fff" text-anchor="middle" font-family="Liberation Sans, sans-serif">示</text><polygon points="2,15.5 16.3,15.5 16.3,10 28.4,21.3 16.3,32.8 16.3,26.8 2,26.8" fill="#0b8a16"/><text x="14" y="24.3" font-size="6.8" font-weight="bold" fill="#fff" text-anchor="middle" font-family="Liberation Sans, sans-serif">最高分</text><polygon points="2,78.5 16.3,78.5 16.3,73 28.4,84.3 16.3,95.8 16.3,89.8 2,89.8" fill="#f5812e"/><text x="14" y="87.3" font-size="6.8" font-weight="bold" fill="#fff" text-anchor="middle" font-family="Liberation Sans, sans-serif">平均分</text><polygon points="2,94.9 16.3,94.9 16.3,89.4 28.4,100.7 16.3,112.2 16.3,106.2 2,106.2" fill="#d2151b"/><text x="14" y="103.7" font-size="6.8" font-weight="bold" fill="#fff" text-anchor="middle" font-family="Liberation Sans, sans-serif">最低分</text><polygon points="49.5,17 64,6 64,11.7 81,11.7 81,21.7 64,21.7 64,27.6" fill="#f32e2e"/><text x="67.5" y="20.0" font-size="7" font-weight="bold" fill="#ffe52a" text-anchor="middle" font-family="Liberation Sans, sans-serif">考生位置</text></svg>
<div style="position:absolute;left:144px;top:549.5px;height:22px;line-height:22px;font-size:17px;color:#333;white-space:nowrap;font-weight:bold;">1157华北理工大学(304组)</div>
<div style="position:absolute;left:145px;top:577.5px;height:20px;line-height:20px;font-size:14px;color:#666;white-space:nowrap;">河北·唐山<span style="margin:0 0.9px">/</span>省属<span style="margin:0 0.9px">/</span>公办<span style="margin:0 0.9px">/</span>大学<span style="margin:0 0.9px">/</span>理工<span style="margin:0 0.9px">/</span>1895年</div>
<div style="position:absolute;left:145px;top:604.5px;height:20px;line-height:20px;font-size:14px;color:#666;white-space:nowrap;">排名：全国274 理工135 &nbsp;&nbsp; 老高考批次：1B、专科批</div>
<div style="position:absolute;left:145px;top:631.5px;height:20px;line-height:20px;font-size:14px;color:#666;white-space:nowrap;">保研</div>
<div style="position:absolute;left:190px;top:631.5px;height:20px;line-height:20px;font-size:14px;color:#1ba1ee;white-space:nowrap;">优势学科</div>
<div style="position:absolute;left:508px;top:581.5px;height:18px;line-height:18px;font-size:15px;color:#333;white-space:nowrap;font-weight:bold;width:90px;text-align:center;">3人</div>
<div style="position:absolute;left:508px;top:600.5px;height:18px;line-height:18px;font-size:14px;color:#777;white-space:nowrap;width:90px;text-align:center;">不限</div>
<div style="position:absolute;left:1113px;top:586px;width:61px;height:26px;border:2px solid #10a0f5;border-radius:5px;color:#1ea0ee;font-size:14px;line-height:26px;text-align:center;">专业1个</div>
<svg style="position:absolute;left:1140px;top:623px" width="11" height="9"><polyline points="0.8,8 5.5,1.5 10.2,8" fill="none" stroke="#2aa3ee" stroke-width="1.4"/></svg>
<div style="position:absolute;left:9px;top:667px;width:1199px;height:161px;background:#fff"></div>
<svg style="position:absolute;left:50px;top:677.5px" width="18" height="19"><polygon points="9,0 18,9.5 12.8,9.5 12.8,19 5.2,19 5.2,9.5 0,9.5" fill="#ff5a2d"/></svg>
<div style="position:absolute;left:69px;top:679.5px;height:18px;line-height:18px;font-size:15px;color:#333;white-space:nowrap;font-weight:bold;">概率</div>
<svg style="position:absolute;left:285px;top:677.5px" width="18" height="19"><polygon points="9,0 18,9.5 12.8,9.5 12.8,19 5.2,19 5.2,9.5 0,9.5" fill="#ff5a2d"/></svg>
<div style="position:absolute;left:304px;top:679.5px;height:18px;line-height:18px;font-size:15px;color:#333;white-space:nowrap;font-weight:bold;">专业名称</div>
<div style="position:absolute;left:508px;top:671.5px;height:15px;line-height:15px;font-size:15px;color:#333;white-space:nowrap;font-weight:bold;width:90px;text-align:center;">2025年</div>
<div style="position:absolute;left:508px;top:686.0px;height:15px;line-height:15px;font-size:15px;color:#333;white-space:nowrap;font-weight:bold;width:90px;text-align:center;">招生计划</div>
<div style="position:absolute;left:598px;top:679.5px;height:18px;line-height:18px;font-size:15px;color:#333;white-space:nowrap;font-weight:bold;width:45px;text-align:center;">年份</div>
<div style="position:absolute;left:643px;top:679.5px;height:18px;line-height:18px;font-size:14px;color:#333;white-space:nowrap;font-weight:bold;width:45px;text-align:center;">计划数</div>
<div style="position:absolute;left:688px;top:679.5px;height:18px;line-height:18px;font-size:15px;color:#333;white-space:nowrap;font-weight:bold;width:100px;text-align:center;">最高分/位次</div>
<div style="position:absolute;left:788px;top:679.5px;height:18px;line-height:18px;font-size:15px;color:#333;white-space:nowrap;font-weight:bold;width:100px;text-align:center;">平均分/位次</div>
<div style="position:absolute;left:888px;top:679.5px;height:18px;line-height:18px;font-size:15px;color:#333;white-space:nowrap;font-weight:bold;width:100px;text-align:center;">最低分/位次</div>
<div style="position:absolute;left:988px;top:679.5px;height:18px;line-height:18px;font-size:15px;color:#333;white-space:nowrap;font-weight:bold;width:40px;text-align:center;">线差</div>
<div style="position:absolute;left:1028px;top:672.0px;height:15px;line-height:15px;font-size:13.5px;color:#333;white-space:nowrap;font-weight:bold;width:50px;text-align:center;">等效分</div>
<div style="position:absolute;left:1028px;top:687.0px;height:15px;line-height:15px;font-size:13.5px;color:#333;white-space:nowrap;font-weight:bold;width:50px;text-align:center;">对比</div>
<div style="position:absolute;left:1078px;top:679.5px;height:18px;line-height:18px;font-size:15px;color:#333;white-space:nowrap;font-weight:bold;width:130px;text-align:center;">操作</div>
<div style="position:absolute;left:598px;top:713.5px;height:18px;line-height:18px;font-size:15px;color:#777;white-space:nowrap;width:45px;text-align:center;">2024</div>
<div style="position:absolute;left:652px;top:710.5px;height:18px;line-height:18px;font-size:15px;color:#3c3c3c;white-space:nowrap;">3</div>
<div style="position:absolute;left:659px;top:717.5px;width:22px;height:14px;background:#fde6e6;color:#f00;font-size:11px;line-height:14px;text-align:center;">征2</div>
<div style="position:absolute;left:688px;top:713.5px;height:18px;line-height:18px;font-size:15px;color:#3c3c3c;white-space:nowrap;width:100px;text-align:center;">511 / 41507</div>
<div style="position:absolute;left:788px;top:713.5px;height:18px;line-height:18px;font-size:15px;color:#3c3c3c;white-space:nowrap;width:100px;text-align:center;">504 / 45282</div>
<div style="position:absolute;left:888px;top:713.5px;height:18px;line-height:18px;font-size:15px;color:#3c3c3c;white-space:nowrap;width:100px;text-align:center;">501 / 46930</div>
<div style="position:absolute;left:988px;top:713.5px;height:18px;line-height:18px;font-size:15px;color:#3c3c3c;white-space:nowrap;width:40px;text-align:center;">121</div>
<div style="position:absolute;left:1028px;top:713.5px;height:18px;line-height:18px;font-size:15px;color:#3c3c3c;white-space:nowrap;width:50px;text-align:center;">33</div>
<div style="position:absolute;left:598px;top:744.0px;height:18px;line-height:18px;font-size:15px;color:#777;white-space:nowrap;width:45px;text-align:center;">2023</div>
<div style="position:absolute;left:652px;top:741.0px;height:18px;line-height:18px;font-size:15px;color:#3c3c3c;white-space:nowrap;">3</div>
<div style="position:absolute;left:659px;top:748.0px;width:22px;height:14px;background:#fde6e6;color:#f00;font-size:11px;line-height:14px;text-align:center;">征1</div>
<div style="position:absolute;left:688px;top:744.0px;height:18px;line-height:18px;font-size:15px;color:#3c3c3c;white-space:nowrap;width:100px;text-align:center;">491 / 37698</div>
<div style="position:absolute;left:788px;top:744.0px;height:18px;line-height:18px;font-size:15px;color:#3c3c3c;white-space:nowrap;width:100px;text-align:center;">489 / 38606</div>
<div style="position:absolute;left:888px;top:744.0px;height:18px;line-height:18px;font-size:15px;color:#3c3c3c;white-space:nowrap;width:100px;text-align:center;">486 / 40012</div>
<div style="position:absolute;left:988px;top:744.0px;height:18px;line-height:18px;font-size:15px;color:#3c3c3c;white-space:nowrap;width:40px;text-align:center;">142</div>
<div style="position:absolute;left:1028px;top:744.0px;height:18px;line-height:18px;font-size:15px;color:#3c3c3c;white-space:nowrap;width:50px;text-align:center;">23</div>
<div style="position:absolute;left:598px;top:774.0px;height:18px;line-height:18px;font-size:15px;color:#777;white-space:nowrap;width:45px;text-align:center;">2022</div>
<div style="position:absolute;left:652px;top:771.0px;height:18px;line-height:18px;font-size:15px;color:#3c3c3c;white-space:nowrap;">3</div>
<div style="position:absolute;left:659px;top:778.0px;width:22px;height:14px;background:#fde6e6;color:#f00;font-size:11px;line-height:14px;text-align:center;">征1</div>
<div style="position:absolute;left:688px;top:774.0px;height:18px;line-height:18px;font-size:15px;color:#3c3c3c;white-space:nowrap;width:100px;text-align:center;">506 / 31548</div>
<div style="position:absolute;left:788px;top:774.0px;height:18px;line-height:18px;font-size:15px;color:#3c3c3c;white-space:nowrap;width:100px;text-align:center;">503 / 33169</div>
<div style="position:absolute;left:888px;top:774.0px;height:18px;line-height:18px;font-size:15px;color:#3c3c3c;white-space:nowrap;width:100px;text-align:center;">498 / 35905</div>
<div style="position:absolute;left:988px;top:774.0px;height:18px;line-height:18px;font-size:15px;color:#3c3c3c;white-space:nowrap;width:40px;text-align:center;">125</div>
<div style="position:absolute;left:1028px;top:774.0px;height:18px;line-height:18px;font-size:15px;color:#3c3c3c;white-space:nowrap;width:50px;text-align:center;">11</div>
<div style="position:absolute;left:599px;top:799px;width:479px;height:29px;background:#fdecea"></div>
<div style="position:absolute;left:598px;top:806.0px;height:14px;line-height:14px;font-size:11px;color:#666;white-space:nowrap;width:45px;text-align:center;">平均值</div>
<div style="position:absolute;left:643px;top:804.0px;height:18px;line-height:18px;font-size:15px;color:#3c3c3c;white-space:nowrap;width:45px;text-align:center;">3</div>
<div style="position:absolute;left:688px;top:804.0px;height:18px;line-height:18px;font-size:15px;color:#3c3c3c;white-space:nowrap;width:100px;text-align:center;">503 / 36918</div>
<div style="position:absolute;left:788px;top:804.0px;height:18px;line-height:18px;font-size:15px;color:#3c3c3c;white-space:nowrap;width:100px;text-align:center;">499 / 39019</div>
<div style="position:absolute;left:888px;top:804.0px;height:18px;line-height:18px;font-size:15px;color:#3c3c3c;white-space:nowrap;width:100px;text-align:center;">495 / 40949</div>
<div style="position:absolute;left:988px;top:804.0px;height:18px;line-height:18px;font-size:15px;color:#3c3c3c;white-space:nowrap;width:40px;text-align:center;">129</div>
<div style="position:absolute;left:1028px;top:804.0px;height:18px;line-height:18px;font-size:15px;color:#3c3c3c;white-space:nowrap;width:50px;text-align:center;">22</div>
<div style="position:absolute;left:598px;top:738px;width:480px;height:1px;background:#d6d6d6"></div>
<div style="position:absolute;left:598px;top:768px;width:480px;height:1px;background:#d6d6d6"></div>
<div style="position:absolute;left:598px;top:798px;width:480px;height:1px;background:#d6d6d6"></div>
<div style="position:absolute;left:9px;top:667px;width:1200px;height:1px;background:#d6d6d6"></div>
<div style="position:absolute;left:9px;top:707px;width:1200px;height:1px;background:#d6d6d6"></div>
<div style="position:absolute;left:9px;top:828px;width:1200px;height:1px;background:#d6d6d6"></div>
<div style="position:absolute;left:9px;top:667px;width:1px;height:162px;background:#d6d6d6"></div>
<div style="position:absolute;left:1208px;top:667px;width:1px;height:162px;background:#d6d6d6"></div>
<div style="position:absolute;left:139px;top:667px;width:1px;height:161px;background:#d6d6d6"></div>
<div style="position:absolute;left:508px;top:667px;width:1px;height:161px;background:#d6d6d6"></div>
<div style="position:absolute;left:598px;top:667px;width:1px;height:161px;background:#d6d6d6"></div>
<div style="position:absolute;left:643px;top:667px;width:1px;height:161px;background:#d6d6d6"></div>
<div style="position:absolute;left:688px;top:667px;width:1px;height:161px;background:#d6d6d6"></div>
<div style="position:absolute;left:788px;top:667px;width:1px;height:161px;background:#d6d6d6"></div>
<div style="position:absolute;left:888px;top:667px;width:1px;height:161px;background:#d6d6d6"></div>
<div style="position:absolute;left:988px;top:667px;width:1px;height:161px;background:#d6d6d6"></div>
<div style="position:absolute;left:1028px;top:667px;width:1px;height:161px;background:#d6d6d6"></div>
<div style="position:absolute;left:1078px;top:667px;width:1px;height:161px;background:#d6d6d6"></div>
<div style="position:absolute;left:9px;top:738.0px;height:18px;line-height:18px;font-size:14px;color:#333;white-space:nowrap;width:130px;text-align:center;">82%</div>
<div style="position:absolute;left:9px;top:759.0px;height:18px;line-height:18px;font-size:14px;color:#333;white-space:nowrap;width:130px;text-align:center;">有一定的概率</div>
<div style="position:absolute;left:9px;top:780.0px;height:18px;line-height:18px;font-size:14px;color:#333;white-space:nowrap;width:130px;text-align:center;">垫一垫</div>
<div style="position:absolute;left:145px;top:742.0px;height:20px;line-height:20px;font-size:16px;color:#333;white-space:nowrap;font-weight:bold;">(08)应用心理学</div>
<div style="position:absolute;left:145px;top:764.5px;height:18px;line-height:18px;font-size:14px;color:#666;white-space:nowrap;">不招色弱、色盲、单色不能识别考生<span style="color:#f00">；</span>4年</div>
<div style="position:absolute;left:145px;top:782.5px;height:18px;line-height:18px;font-size:14px;color:#666;white-space:nowrap;">国家级一流专业</div>
<div style="position:absolute;left:544px;top:710px;width:51px;height:28px;border:3px solid #f0282c;"></div>
<div style="position:absolute;left:556px;top:716.0px;height:18px;line-height:18px;font-size:15px;color:#777;white-space:nowrap;">p137</div>
<div style="position:absolute;left:508px;top:749.5px;height:18px;line-height:18px;font-size:15px;color:#333;white-space:nowrap;font-weight:bold;width:90px;text-align:center;">3人</div>
<div style="position:absolute;left:508px;top:770.5px;height:18px;line-height:18px;font-size:14.5px;color:#777;white-space:nowrap;width:90px;text-align:center;">4900元/年</div>
<div style="position:absolute;left:1111px;top:753px;width:63px;height:28px;border:1.5px solid #2aa6f3;border-radius:6px;background:#fdfddc;color:#1ea0ee;font-size:14px;line-height:28px;text-align:center;">填报</div>
<div style="position:absolute;left:9px;top:828px;width:1px;height:4px;background:#d6d6d6"></div>
<div style="position:absolute;left:1208px;top:828px;width:1px;height:4px;background:#d6d6d6"></div></body></html>
